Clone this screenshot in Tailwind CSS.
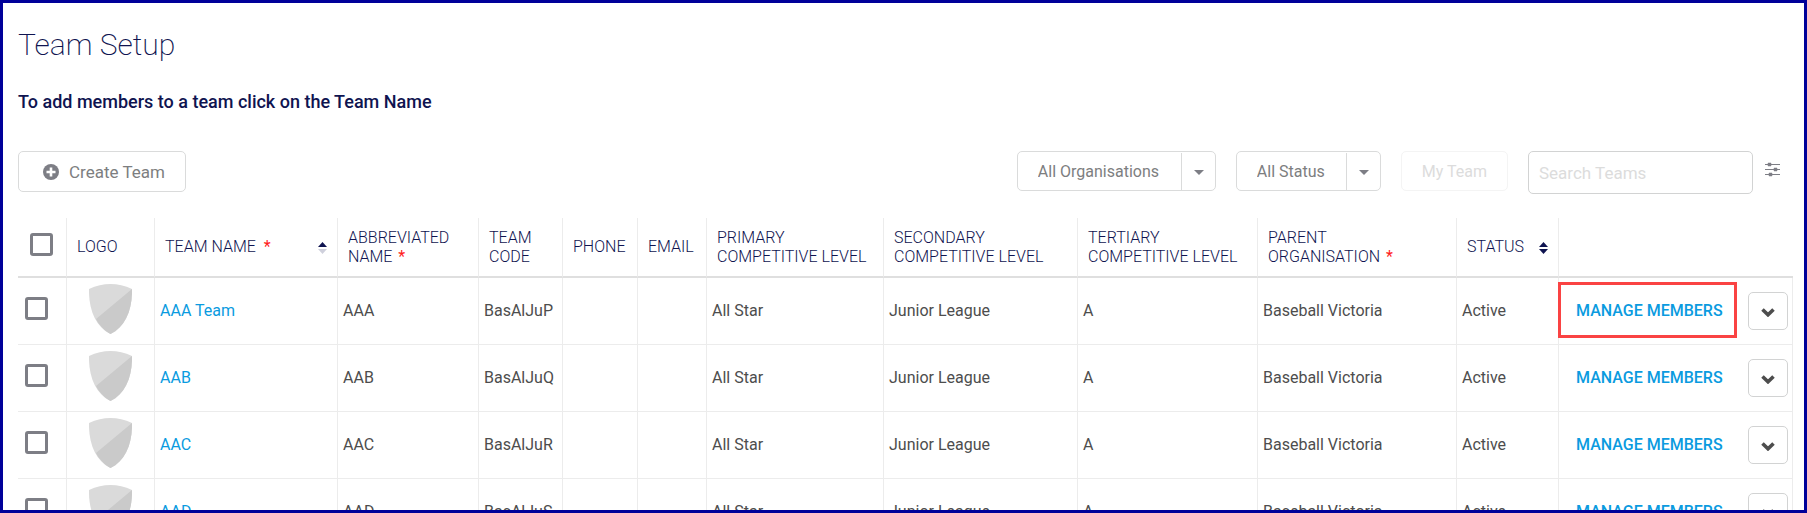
<!DOCTYPE html>
<html lang="en">
<head>
  <meta charset="UTF-8" />
  <meta name="viewport" content="width=device-width, initial-scale=1.0" />
  <title>Team Setup</title>
  <script src="https://cdn.jsdelivr.net/npm/@tailwindcss/browser@4"></script>
</head>
<body class="h-screen overflow-hidden border-3 border-[#000099] bg-white pr-[11px] pl-[15px] font-['Roboto',sans-serif] text-base text-[#4d4d4d]">
  <h1 class="pt-6 text-[30px] leading-9 font-extralight text-[#0f1450]">Team Setup</h1>
  <p class="mt-[25px] text-lg leading-7 font-medium text-[#0f1450]">To add members to a team click on the Team Name</p>

  <div class="mt-[35px] flex items-start justify-between">
    <button type="button" class="flex h-[41px] items-center gap-[10px] rounded-[5px] border border-[#dadbdb] pt-0.5 pr-5 pl-6 text-[17px] text-[#7d7e80]">
      <svg class="mb-0.5 size-4" viewBox="0 0 16 16" aria-hidden="true">
        <circle cx="8" cy="8" r="8" fill="#7d7e85" />
        <path d="M8 3.5v9M3.5 8h9" stroke="#fff" stroke-width="2.6" />
      </svg>
      Create Team
    </button>

    <div class="flex items-start gap-5">
      <div class="relative">
        <select aria-label="Organisation" class="h-10 appearance-none rounded-[5px] border border-[#dadbdb] bg-white pt-0.5 pr-[55px] pl-5 text-[#7d7e80]">
          <option>All Organisations</option>
        </select>
        <span class="pointer-events-none absolute top-0.5 right-0 bottom-0 flex w-[35px] items-center justify-center border-l border-[#dadbdb]">
          <svg class="h-[5px] w-[10px]" viewBox="0 0 10 5"><path d="M0 0h10L5 5z" fill="#7d7e85" /></svg>
        </span>
      </div>
      <div class="relative">
        <select aria-label="Status" class="h-10 appearance-none rounded-[5px] border border-[#dadbdb] bg-white pt-0.5 pr-[55px] pl-5 text-[#7d7e80]">
          <option>All Status</option>
        </select>
        <span class="pointer-events-none absolute top-0.5 right-0 bottom-0 flex w-[35px] items-center justify-center border-l border-[#dadbdb]">
          <svg class="h-[5px] w-[10px]" viewBox="0 0 10 5"><path d="M0 0h10L5 5z" fill="#7d7e85" /></svg>
        </span>
      </div>
      <button type="button" disabled class="h-10 rounded-[5px] border border-[#f4f4f4] px-5 pt-0.5 text-[#dcdcdc]">My Team</button>
      <div class="flex items-start gap-3">
        <input type="text" aria-label="Search Teams" placeholder="Search Teams" class="h-[43px] w-[225px] rounded-[5px] border border-[#d2d3d3] px-[10px] text-[17px] placeholder:text-[#dcdcdc]" />
        <button type="button" aria-label="Filters" class="mt-[11px] mr-[13px]">
          <svg class="h-[15px] w-[15px]" viewBox="0 0 15 15">
            <path d="M0 2.500h15M0 7.500h15M0 12.500h15" stroke="#7d7e85" stroke-width="1" />
            <path d="M3 1h3v3H3zM9 6h3v3H9zM4 11h3v3H4z" fill="#7d7e85" stroke="#7d7e85" stroke-width=".5" />
          </svg>
        </button>
      </div>
    </div>
  </div>

  <table class="mt-6 w-full table-fixed border-separate border-spacing-0">
    <colgroup>
      <col class="w-[49px]" />
      <col class="w-[88px]" />
      <col class="w-[183px]" />
      <col class="w-[141px]" />
      <col class="w-[84px]" />
      <col class="w-[75px]" />
      <col class="w-[69px]" />
      <col class="w-[177px]" />
      <col class="w-[194px]" />
      <col class="w-[180px]" />
      <col class="w-[199px]" />
      <col class="w-[102px]" />
      <col class="w-[234px]" />
    </colgroup>
    <thead>
      <tr class="h-[60px] text-left leading-[19px] text-[#0f1450] *:border-b-2 *:border-b-[#dfdfdf] *:font-light">
        <th class="border-r border-r-[#ececec] pb-1.5 pl-3"><input type="checkbox" aria-label="Select all teams" class="block size-[23px] appearance-none rounded-[3px] border-3 border-[#7d7e85]" /></th>
        <th class="border-r border-r-[#ececec] pb-0.5 pl-[10px]">LOGO</th>
        <th class="border-r border-r-[#ececec] px-[10px] pb-0.5">
          <div class="flex items-center justify-between">
            <span>TEAM NAME <span class="ml-1 font-normal text-[#ff2020]">*</span></span>
            <svg class="mt-1 h-3 w-[9px]" viewBox="0 0 9 12"><path d="M0 5l4.500-5L9 5z" fill="#0f1450" /><path d="M0 7h9l-4.500 5z" fill="#cfd0dc" /></svg>
          </div>
        </th>
        <th class="border-r border-r-[#ececec] pl-[10px]">ABBREVIATED<br />NAME <span class="ml-0.5 font-normal text-[#ff2020]">*</span></th>
        <th class="border-r border-r-[#ececec] pl-[10px]">TEAM<br />CODE</th>
        <th class="border-r border-r-[#ececec] pb-0.5 pl-[10px]">PHONE</th>
        <th class="border-r border-r-[#ececec] pb-0.5 pl-[10px]">EMAIL</th>
        <th class="border-r border-r-[#ececec] pl-[10px]">PRIMARY<br />COMPETITIVE LEVEL</th>
        <th class="border-r border-r-[#ececec] pl-[10px]">SECONDARY<br />COMPETITIVE LEVEL</th>
        <th class="border-r border-r-[#ececec] pl-[10px]">TERTIARY<br />COMPETITIVE LEVEL</th>
        <th class="border-r border-r-[#ececec] pl-[10px]">PARENT<br />ORGANISATION <span class="ml-0.5 font-normal text-[#ff2020]">*</span></th>
        <th class="border-r border-r-[#ececec] px-[10px] pb-0.5">
          <div class="flex items-center justify-between">
            <span>STATUS</span>
            <svg class="mt-1 h-3 w-[9px]" viewBox="0 0 9 12"><path d="M0 5l4.500-5L9 5z" fill="#0f1450" /><path d="M0 7h9l-4.500 5z" fill="#0f1450" /></svg>
          </div>
        </th>
        <th></th>
      </tr>
    </thead>
    <tbody id="teams"></tbody>
  </table>

  <script>
    const teams = [
      { name: "AAA Team", abbr: "AAA", code: "BasAlJuP", highlight: true },
      { name: "AAB", abbr: "AAB", code: "BasAlJuQ" },
      { name: "AAC", abbr: "AAC", code: "BasAlJuR" },
      { name: "AAD", abbr: "AAD", code: "BasAlJuS" },
    ];

    document.getElementById("teams").innerHTML = teams.map((team) => `
      <tr class="h-[67px] *:border-r *:border-b *:border-[#ececec] *:pl-[5px]">
        <td class="pb-1.5"><input type="checkbox" aria-label="Select ${team.name}" class="ml-0.5 block size-[23px] appearance-none rounded-[3px] border-3 border-[#7d7e85]" /></td>
        <td class="pt-px pb-[5px]">
          <svg class="ml-[17px] h-[50px] w-[43px]" viewBox="0 0 43 50">
            <path d="M0 5Q21.500-5 43 5C43.500 26 36 43 21.500 50C7 43-.5 26 0 5z" fill="#dadada" />
            <path d="M43 5C43.500 26 36 43 21.500 50C15.500 47 10.500 41.500 7 35z" fill="#cacaca" />
          </svg>
        </td>
        <td><a href="#" class="text-[#0a9bdf]">${team.name}</a></td>
        <td>${team.abbr}</td>
        <td>${team.code}</td>
        <td></td>
        <td></td>
        <td>All Star</td>
        <td>Junior League</td>
        <td>A</td>
        <td>Baseball Victoria</td>
        <td>Active</td>
        <td class="relative">
          ${team.highlight ? '<span class="pointer-events-none absolute top-1 -left-px h-14 w-[179px] border-3 border-[#fa4343]"></span>' : ""}
          <div class="flex items-center justify-between pr-1 pl-3">
            <a href="#" class="font-medium text-[#0a9bdf]">MANAGE MEMBERS</a>
            <button type="button" aria-label="More actions" class="flex h-[38px] w-10 items-center justify-center rounded-[5px] border border-[#d2d3d3]">
              <svg class="mt-0.5 h-[9px] w-[14px]" viewBox="0 0 14 9"><path d="M1.500 1.500L7 6.800l5.500-5.300" fill="none" stroke="#4d4d4d" stroke-width="3.600" /></svg>
            </button>
          </div>
        </td>
      </tr>`).join("");
  </script>
</body>
</html>
